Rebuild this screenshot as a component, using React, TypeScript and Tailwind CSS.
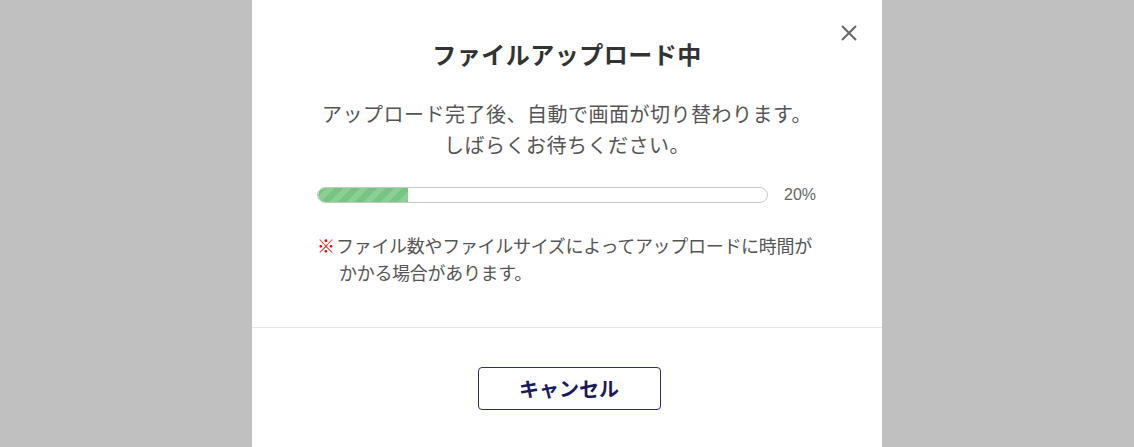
import React from "react";

export default function App() {
  const progress = 20;
  return (
    <div
      className="w-[1134px] h-[447px] bg-[#c0c0c0] flex justify-center overflow-hidden"
      style={{ fontFamily: '"Noto Sans CJK JP", "Noto Sans", sans-serif' }}
    >
      <div className="relative w-[630px] h-[447px] bg-white flex flex-col">
        <button className="absolute top-[22px] right-[22px] w-[22px] h-[22px] flex items-center justify-center">
          <svg width="20" height="20" viewBox="0 0 20 20" fill="none">
            <path d="M3 3 L17 17 M17 3 L3 17" stroke="#666" strokeWidth="2" />
          </svg>
        </button>
        <div className="px-[65px] pt-[38px] pb-[41px] border-b border-[#e5e5e5] flex flex-col">
          <h2 className="text-center text-[24px] leading-[32px] font-bold tracking-[0.5px] text-[#333]">
            ファイルアップロード中
          </h2>
          <p className="mt-[28px] text-center text-[20px] leading-[31px] tracking-[0.5px] text-[#555]">
            アップロード完了後、自動で画面が切り替わります。
            <br />
            しばらくお待ちください。
          </p>
          <div className="mt-[25px] flex items-center">
            <div className="w-[451px] h-[16px] rounded-full border border-[#c8c8c8] overflow-hidden bg-white">
              <div
                className="h-full rounded-l-full bg-[repeating-linear-gradient(135deg,#77c483_0px,#77c483_6px,#8ccf96_6px,#8ccf96_12px)]"
                style={{ width: `${progress}%` }}
              />
            </div>
            <span
              className="ml-[16px] text-[16px] leading-[20px] text-[#666]"
              style={{ fontFamily: '"Liberation Sans", Arial, sans-serif' }}
            >
              {progress}%
            </span>
          </div>
          <p className="mt-[27px] w-[500px] pl-[22px] -indent-[22px] text-[18px] leading-[27px] tracking-[-0.3px] text-[#555]">
            <span className="text-[#e60000] font-bold tracking-normal mr-[1px]">※</span>
            ファイル数やファイルサイズによってアップロードに時間がかかる場合があります。
          </p>
        </div>
        <div className="pt-[39px] pl-[4px] flex justify-center">
          <button className="w-[183px] h-[43px] rounded-[4px] border border-[#2c2c72] text-[#1a1a5e] text-[20px] font-bold flex items-center justify-center">
            キャンセル
          </button>
        </div>
      </div>
    </div>
  );
}
